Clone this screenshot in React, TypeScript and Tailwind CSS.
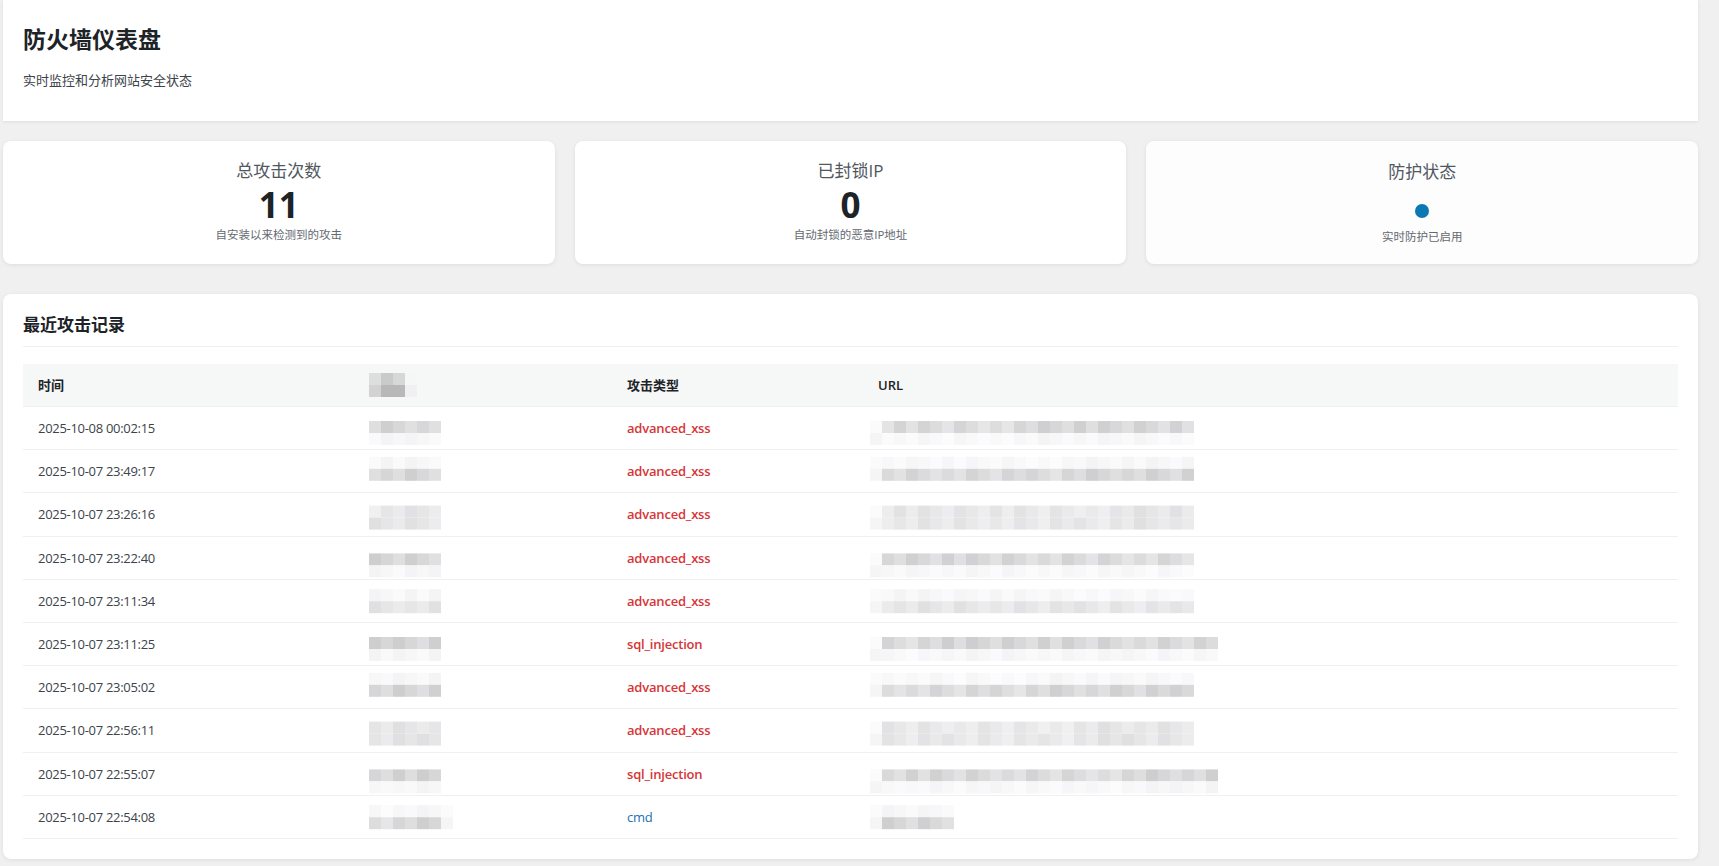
import React from 'react';

type Row = {
  time: string;
  type: string;
  ip: string;
  url: string;
  ipLen: number;
  urlLen: number;
};

const rows: Row[] = [
  { time: '2025-10-08 00:02:15', type: 'advanced_xss', ip: 'dl', url: 'dl', ipLen: 6, urlLen: 26 },
  { time: '2025-10-07 23:49:17', type: 'advanced_xss', ip: 'ld', url: 'ld', ipLen: 6, urlLen: 26 },
  { time: '2025-10-07 23:26:16', type: 'advanced_xss', ip: 'mm', url: 'mm', ipLen: 6, urlLen: 26 },
  { time: '2025-10-07 23:22:40', type: 'advanced_xss', ip: 'dl', url: 'dl', ipLen: 6, urlLen: 26 },
  { time: '2025-10-07 23:11:34', type: 'advanced_xss', ip: 'lm', url: 'lm', ipLen: 6, urlLen: 26 },
  { time: '2025-10-07 23:11:25', type: 'sql_injection', ip: 'dl', url: 'dl', ipLen: 6, urlLen: 28 },
  { time: '2025-10-07 23:05:02', type: 'advanced_xss', ip: 'ld', url: 'ld', ipLen: 6, urlLen: 26 },
  { time: '2025-10-07 22:56:11', type: 'advanced_xss', ip: 'mm', url: 'mm', ipLen: 6, urlLen: 26 },
  { time: '2025-10-07 22:55:07', type: 'sql_injection', ip: 'dl', url: 'dl', ipLen: 6, urlLen: 28 },
  { time: '2025-10-07 22:54:08', type: 'cmd', ip: 'ld', url: 'ld', ipLen: 7, urlLen: 6 },
];

// where the pixelated blocks start in the screenshot (12px mosaic grid)
const mosaicTops = [421, 457, 505, 553, 589, 637, 673, 721, 769, 805];

// pseudo random grey for the pixelated (redacted) cells
function shade(seed: number, r: number, c: number, level: string) {
  const h = (((seed * 131 + r * 71 + c * 37 + 17) * 2654435761) >>> 0) % 1000;
  const f = h / 1000;
  let base = 244;
  let spread = 8;
  if (level === 'd') {
    base = 206;
    spread = 24;
  } else if (level === 'm') {
    base = 224;
    spread = 16;
  }
  const v = Math.round(base + f * spread);
  const tint = h % 3 === 0 ? 3 : 0;
  return `rgb(${v},${v},${Math.min(255, v + tint)})`;
}

function Mosaic({
  cols,
  pattern,
  seed,
  faintFirst,
  faintLast,
}: {
  cols: number;
  pattern: string;
  seed: number;
  faintFirst?: boolean;
  faintLast?: boolean;
}) {
  return (
    <div className="flex flex-col">
      {[0, 1].map((r) => (
        <div key={r} className="flex">
          {Array.from({ length: cols }).map((_, c) => {
            let bg = shade(seed, r, c, pattern[r]);
            if ((faintFirst && c === 0) || (faintLast && c === cols - 1)) bg = r === 0 ? '#fbfbfb' : '#f5f5f5';
            return <span key={c} className="block w-3 h-3" style={{ background: bg }} />;
          })}
        </div>
      ))}
    </div>
  );
}

function gridShift(i: number) {
  return mosaicTops[i] - (407 + 43.2 * i + 12);
}

function StatCard({ label, value, desc }: { label: string; value: string; desc: string }) {
  return (
    <div className="bg-white rounded-lg shadow-[0_1px_4px_rgba(0,0,0,0.08)] px-5 pt-5 pb-5 flex flex-col items-center">
      <div className="text-[17px] leading-5 text-[#50575e]">{label}</div>
      <div className="mt-[6px] text-[35px] leading-[35px] font-bold text-[#1d2327]">{value}</div>
      <div className="mt-[5px] text-[11.5px] leading-4 text-[#646970]">{desc}</div>
    </div>
  );
}

export default function App() {
  return (
    <div className="h-screen overflow-hidden bg-[#f0f0f1] pl-[3px] pr-[21px] font-['Open_Sans','Noto_Sans_CJK_SC',sans-serif] text-[#1d2327]">
      {/* header */}
      <div className="bg-white shadow-[0_1px_3px_rgba(0,0,0,0.08)] px-5 pt-6 pb-8">
        <h1 className="text-[23px] leading-[30px] font-bold text-[#1d2327]">防火墙仪表盘</h1>
        <p className="mt-[17px] text-[13px] leading-[18px] text-[#3c434a]">实时监控和分析网站安全状态</p>
      </div>

      {/* stats */}
      <div className="grid grid-cols-3 gap-5 mt-5">
        <StatCard label="总攻击次数" value="11" desc="自安装以来检测到的攻击" />
        <StatCard label="已封锁IP" value="0" desc="自动封锁的恶意IP地址" />
        <div className="bg-[#fdfdfd] rounded-lg shadow-[0_1px_4px_rgba(0,0,0,0.08)] px-5 pt-[21px] pb-[19px] flex flex-col items-center">
          <div className="text-[17px] leading-5 text-[#50575e]">防护状态</div>
          <div className="mt-[22px] w-[14px] h-[14px] rounded-full bg-[#0b77b3]" />
          <div className="mt-[11px] text-[11.5px] leading-4 text-[#646970]">实时防护已启用</div>
        </div>
      </div>

      {/* recent attacks */}
      <div className="mt-[30px] bg-white rounded-lg shadow-[0_1px_4px_rgba(0,0,0,0.08)] px-5 pt-5 pb-5">
        <h2 className="text-[17px] leading-[22px] font-bold text-[#1d2327] pb-[10px] border-b border-[#f0f0f1]">
          最近攻击记录
        </h2>
        <table className="mt-[17px] w-full table-fixed border-collapse text-[13px] leading-[18px]">
          <colgroup>
            <col className="w-[331px]" />
            <col className="w-[258px]" />
            <col className="w-[251px]" />
            <col />
          </colgroup>
          <thead>
            <tr className="bg-[#f6f7f7] border-b border-[#f0f0f1]">
              <th className="px-[15px] py-3 text-left font-semibold text-[#1d2327]">时间</th>
              <th className="px-[15px] py-3 text-left">
                <div className="h-[18px]">
                  <div className="-translate-y-[3px]">
                    <div className="flex flex-col">
                      <div className="flex">
                        <span className="block w-3 h-3 bg-[#dedede]" />
                        <span className="block w-3 h-3 bg-[#cacaca]" />
                        <span className="block w-3 h-3 bg-[#d6d8d8]" />
                        <span className="block w-3 h-3 bg-[#f6f6f7]" />
                      </div>
                      <div className="flex">
                        <span className="block w-3 h-3 bg-[#d2d2d2]" />
                        <span className="block w-3 h-3 bg-[#b8b8b8]" />
                        <span className="block w-3 h-3 bg-[#b8b8b8]" />
                        <span className="block w-3 h-3 bg-[#f0f0f2]" />
                      </div>
                    </div>
                  </div>
                </div>
              </th>
              <th className="px-[15px] py-3 text-left font-semibold text-[#1d2327]">攻击类型</th>
              <th className="px-[15px] py-3 text-left font-semibold text-[#1d2327]">URL</th>
            </tr>
          </thead>
          <tbody>
            {rows.map((r, i) => (
              <tr key={r.time} className="border-b border-[#f0f0f1]">
                <td className="px-[15px] py-3 leading-[18.2px] tracking-[-0.3px] text-[#3c434a]">{r.time}</td>
                <td className="px-[15px] py-3 leading-[18.2px]">
                  <div className="h-[18px]">
                    <div style={{ transform: `translateY(${gridShift(i)}px)` }}>
                      <Mosaic cols={r.ipLen} pattern={r.ip} seed={i * 7 + 1} faintLast={r.ipLen > 6} />
                    </div>
                  </div>
                </td>
                <td className="px-[15px] py-3 leading-[18.2px] tracking-[-0.2px]">
                  {r.type === 'cmd' ? (
                    <span className="text-[#2271b1]">{r.type}</span>
                  ) : (
                    <span className="font-semibold text-[#d63638]">{r.type}</span>
                  )}
                </td>
                <td className="px-[15px] py-3 leading-[18.2px]">
                  <div className="h-[18px] -ml-2">
                    <div style={{ transform: `translateY(${gridShift(i)}px)` }}>
                      <Mosaic cols={r.urlLen + 1} pattern={r.url} seed={i * 13 + 5} faintFirst />
                    </div>
                  </div>
                </td>
              </tr>
            ))}
          </tbody>
        </table>
      </div>
    </div>
  );
}
